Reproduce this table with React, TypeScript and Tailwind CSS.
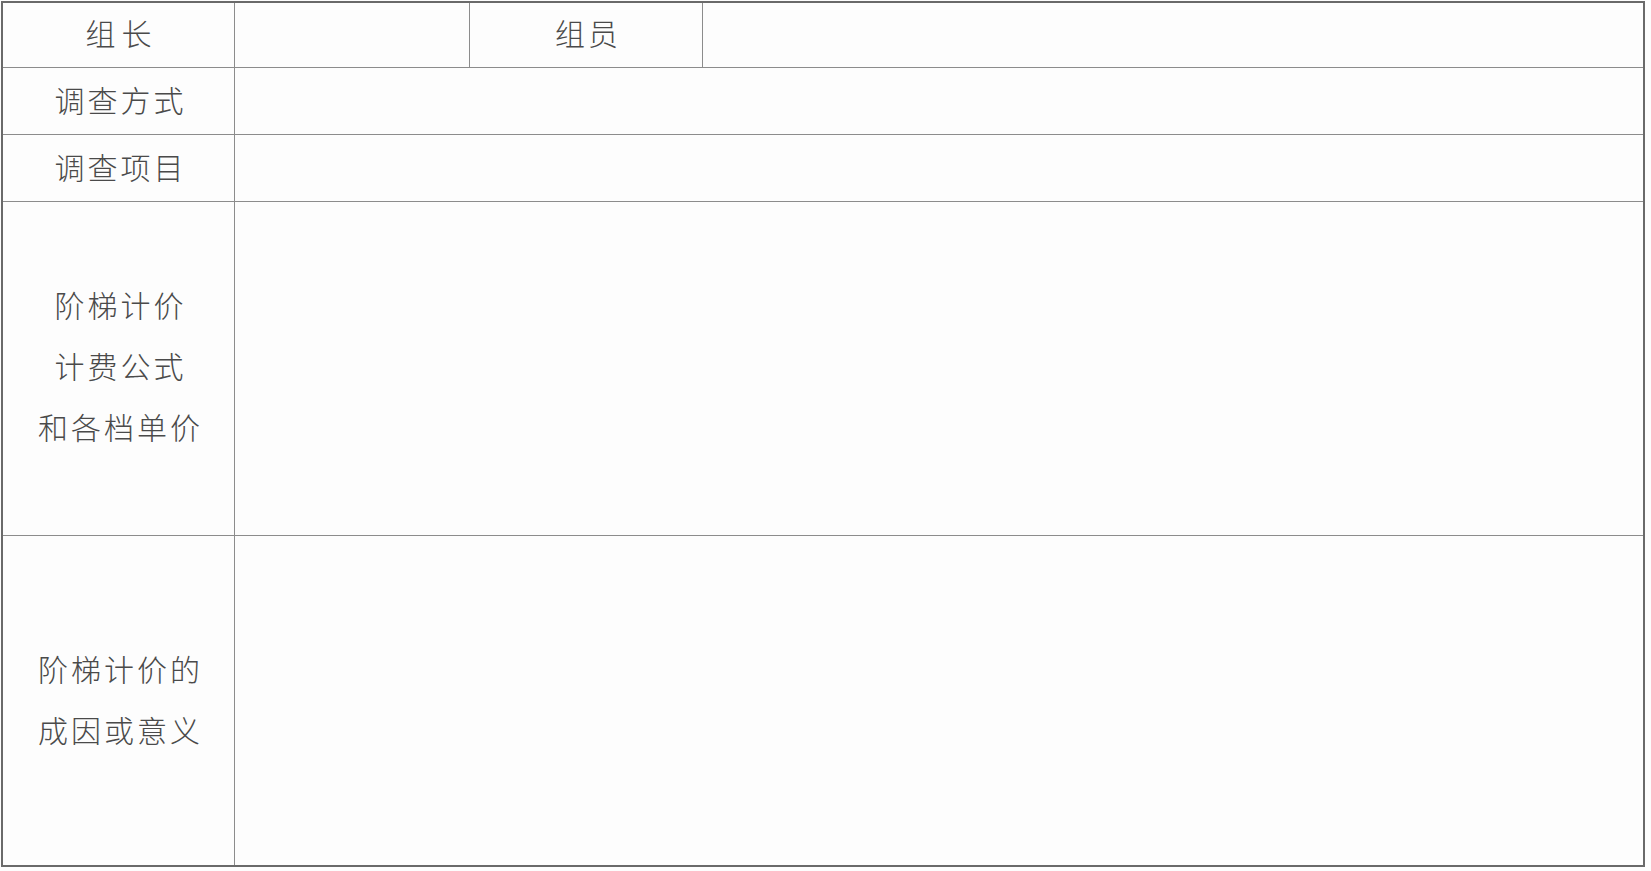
import React from 'react';

const base = 'text-[30px] font-light text-[#4a4a4a] tracking-[3px]';
const label = `${base} leading-none`;
const line = `${base} leading-[61px] block`;

const App: React.FC = () => {
  return (
    <div
      className="w-[1651px] h-[871px] bg-[#fdfdfd] pt-[1px] pl-[1px]"
      style={{ fontFamily: '"Noto Sans CJK SC", "Noto Sans", sans-serif' }}
    >
      <div className="w-[1644px] h-[866px] border-2 border-[#6a6a6a] flex flex-col">
        {/* 组长 / 组员 */}
        <div className="h-[65px] flex border-b border-[#8c8c8c]">
          <div className="w-[232px] border-r border-[#8c8c8c] flex items-center justify-center pb-[6px] pl-[6px]">
            <span className={`${base} leading-none tracking-[6px]`}>组长</span>
          </div>
          <div className="w-[235px] border-r border-[#8c8c8c]" />
          <div className="w-[233px] border-r border-[#8c8c8c] flex items-center justify-center pb-[6px] pl-[4px]">
            <span className={label}>组员</span>
          </div>
          <div className="flex-1" />
        </div>

        {/* 调查方式 */}
        <div className="h-[67px] flex border-b border-[#8c8c8c]">
          <div className="w-[232px] border-r border-[#8c8c8c] flex items-center justify-center pb-[4px] pl-[4px]">
            <span className={label}>调查方式</span>
          </div>
          <div className="flex-1" />
        </div>

        {/* 调查项目 */}
        <div className="h-[67px] flex border-b border-[#8c8c8c]">
          <div className="w-[232px] border-r border-[#8c8c8c] flex items-center justify-center pb-[5px] pl-[4px]">
            <span className={label}>调查项目</span>
          </div>
          <div className="flex-1" />
        </div>

        {/* 阶梯计价计费公式 */}
        <div className="h-[334px] flex border-b border-[#8c8c8c]">
          <div className="w-[232px] border-r border-[#8c8c8c] flex flex-col items-center justify-center pl-[4px] pb-[6px]">
            <span className={line}>阶梯计价</span>
            <span className={line}>计费公式</span>
            <span className={line}>和各档单价</span>
          </div>
          <div className="flex-1" />
        </div>

        {/* 成因或意义 */}
        <div className="flex-1 flex">
          <div className="w-[232px] border-r border-[#8c8c8c] flex flex-col items-center justify-center pl-[4px] pb-[4px]">
            <span className={line}>阶梯计价的</span>
            <span className={line}>成因或意义</span>
          </div>
          <div className="flex-1" />
        </div>
      </div>
    </div>
  );
};

export default App;
